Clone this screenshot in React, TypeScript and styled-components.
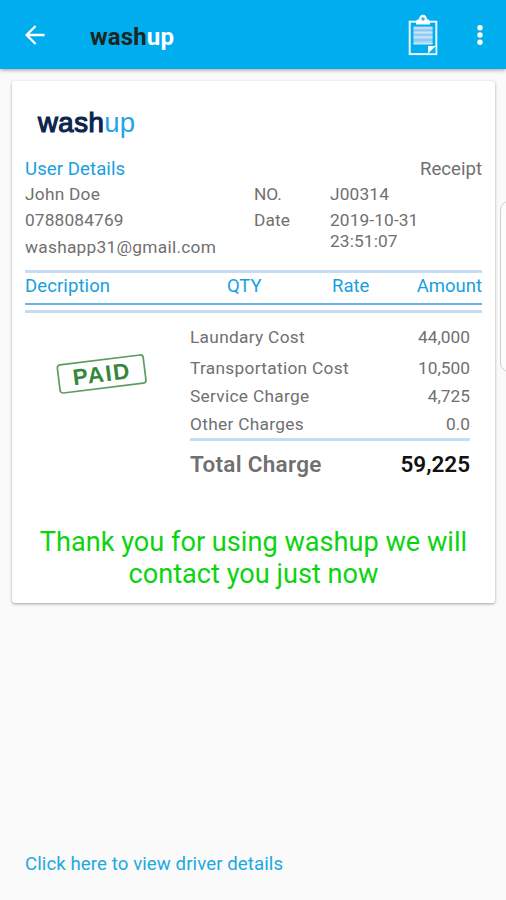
import React from "react";
import styled, { createGlobalStyle } from "styled-components";

const GlobalStyle = createGlobalStyle`
  * { box-sizing: border-box; }
  html, body { margin: 0; background: #fafafa; }
  body { font-family: Roboto, "Liberation Sans", sans-serif; font-size: 17.3px; color: #707070; }
`;

const Screen = styled.main`
  position: relative;
  display: flex;
  flex-direction: column;
  width: 506px;
  height: 900px;
  overflow: hidden;
  background: #fafafa;
`;

const Toolbar = styled.header`
  display: flex;
  align-items: center;
  flex: none;
  height: 69px;
  padding: 1px 22px 0 24px;
  background: #00aeef;
  box-shadow: 0 1px 4px rgba(0, 0, 0, 0.38);
`;

const IconButton = styled.button<{ $gap?: number }>`
  display: flex;
  padding: 0;
  border: 0;
  background: none;
  margin-left: ${(p) => p.$gap ?? 0}px;
`;

const Title = styled.h1`
  flex: 1;
  margin: 3px 0 0 44px;
  font-size: 24px;
  line-height: 28px;
  font-weight: 700;
  letter-spacing: 0.15px;
  color: #1d2521;
  span { color: #fff; }
`;

const Card = styled.section`
  flex: none;
  width: 483px;
  height: 522px;
  margin: 12px 0 0 12px;
  padding: 26px 13px 0;
  border-radius: 3px;
  background: #fff;
  box-shadow: 0 1px 3px rgba(0, 0, 0, 0.36);
`;

const Logo = styled.div`
  margin-left: 13px;
  height: 50px;
  font: 400 27.5px/31px "Liberation Sans", Arial, sans-serif;
  letter-spacing: 0.35px;
  color: #24a4e4;
  b { color: #0c2550; font-weight: 400; letter-spacing: 0.5px; -webkit-text-stroke: 1.2px #0c2550; }
`;

const Heading = styled.div`
  display: flex;
  justify-content: space-between;
  line-height: 24px;
  font-size: 18.6px;
`;

const Text = styled.span<{ $color?: string; $spacing?: number }>`
  white-space: nowrap;
  color: ${(p) => p.$color ?? "inherit"};
  letter-spacing: ${(p) => p.$spacing ?? 0}px;
`;

const Details = styled.div`
  display: grid;
  grid-template-columns: 229px 76px 110px;
  grid-template-rows: 26px 27px 36px;
  line-height: 26px;
`;

const DateValue = styled.span`
  grid-row: 2 / 4;
  grid-column: 3;
  padding-top: 3px;
  line-height: 20.6px;
  letter-spacing: 0.12px;
`;

const Rule = styled.hr<{ $thin?: boolean; $top?: number }>`
  height: ${(p) => (p.$thin ? 2 : 3)}px;
  margin: ${(p) => p.$top ?? 0}px 0 0;
  border: 0;
  background: ${(p) => (p.$thin ? "#69b3e5" : "#c5ddf3")};
`;

const TableHead = styled.div`
  display: grid;
  grid-template-columns: 202px 105px 1fr auto;
  height: 30px;
  line-height: 26px;
  font-size: 18.5px;
  color: #189fe0;
`;

const Body = styled.div`
  display: grid;
  grid-template-columns: 165px 280px;
  padding-top: 10px;
`;

const Stamp = styled.div`
  padding: 29px 0 0 30px;
  svg { display: block; }
`;

const CostRow = styled.div<{ $height: number }>`
  display: flex;
  justify-content: space-between;
  height: ${(p) => p.$height}px;
  line-height: 28px;
`;

const Total = styled.div`
  display: flex;
  justify-content: space-between;
  padding-top: 8px;
  font-size: 22.5px;
  font-weight: 600;
  line-height: 30px;
  b { color: #111; font-weight: 600; }
`;

const Thanks = styled.p`
  margin: 47px 0 0;
  text-align: center;
  font-size: 27.15px;
  line-height: 32px;
  color: #0bd40f;
`;

const DriverLink = styled.a`
  margin: auto 0 24px 25px;
  line-height: 24px;
  font-size: 18.6px;
  letter-spacing: 0.1px;
  color: #20a9e0;
`;

const EdgeHandle = styled.div`
  position: absolute;
  top: 201px;
  left: 500px;
  width: 20px;
  height: 171px;
  border: 1px solid #cdcfd1;
  border-radius: 9px;
  background: #fcfcfc;
`;

const BackIcon = () => (
  <svg width="22" height="22" viewBox="0 0 22 22" fill="none" stroke="#fff" strokeWidth="2.3">
    <path d="M20.5 11H3M11.6 2 2.6 11l9 9" />
  </svg>
);

const ClipboardIcon = () => (
  <svg width="30" height="42" viewBox="0 0 30 42" fill="none">
    <rect x="1.7" y="7.7" width="26.6" height="32.4" stroke="#e9f8ff" strokeWidth="2" />
    <rect x="5.5" y="12.5" width="19" height="18" fill="#a5d5f4" />
    <path d="M5.5 14H24.5M5.5 18.5H24.5M5.5 23H24.5M5.5 29.5H24.5" stroke="#c8e5fa" strokeWidth="1.7" />
    <path d="M5.5 16.2H24.5M5.5 21H24.5M5.5 26H24.5" stroke="#7fc0ed" />
    <path d="M20 39.5 28 31.5V40h-8Z" fill="#08aeed" />
    <path d="M20 39.5v-7.5h8Z" fill="#fff" />
    <path d="M28.3 31v9.1H19" stroke="#e9f8ff" strokeWidth="1.5" />
    <path d="M8 10.5V8q0-2.3 3-2.8C11.3 2.5 12.7.8 15 .8s3.7 1.7 4 4.4q3 .5 3 2.8v2.5Z" fill="#fff" />
    <circle cx="15" cy="5" r="1.8" fill="#35b8ee" />
  </svg>
);

const MoreIcon = () => (
  <svg width="8" height="22" viewBox="0 0 8 22" fill="#fff">
    <circle cx="4" cy="3.7" r="2.7" />
    <circle cx="4" cy="11" r="2.7" />
    <circle cx="4" cy="18.3" r="2.7" />
  </svg>
);

const PaidStamp = () => (
  <svg width="94" height="44" viewBox="0 0 94 44">
    <g transform="rotate(-7 46.5 22)">
      <rect x="3.4" y="7.8" width="86.5" height="28.4" rx="3" fill="none" stroke="#5c9c60" strokeWidth="1.7" />
      <text x="46" y="29.8" textAnchor="middle" fontFamily="Liberation Sans, Arial, sans-serif" fontWeight="700" fontSize="22.5" textLength="57" fill="#35883b">PAID</text>
    </g>
  </svg>
);

const costs = [
  { label: "Laundary Cost", value: "44,000", height: 31 },
  { label: "Transportation Cost", value: "10,500", height: 28 },
  { label: "Service Charge", value: "4,725", height: 28 },
  { label: "Other Charges", value: "0.0", height: 28 },
];

export default function App() {
  return (
    <>
      <GlobalStyle />
      <Screen>
        <Toolbar>
          <IconButton aria-label="Back"><BackIcon /></IconButton>
          <Title>wash<span>up</span></Title>
          <IconButton aria-label="Receipts"><ClipboardIcon /></IconButton>
          <IconButton aria-label="More options" $gap={38}><MoreIcon /></IconButton>
        </Toolbar>
        <Card>
          <Logo><b>wash</b>up</Logo>
          <Heading>
            <Text $color="#18a0e2" $spacing={0.07}>User Details</Text>
            <Text>Receipt</Text>
          </Heading>
          <Details>
            <Text $spacing={0.25}>John Doe</Text>
            <Text>NO.</Text>
            <Text $spacing={0.15}>J00314</Text>
            <Text $spacing={0.15}>0788084769</Text>
            <Text $spacing={0.1}>Date</Text>
            <DateValue>2019-10-31 23:51:07</DateValue>
            <Text $spacing={0.28}>washapp31@gmail.com</Text>
          </Details>
          <Rule />
          <TableHead>
            <Text $spacing={0.1}>Decription</Text>
            <Text>QTY</Text>
            <Text>Rate</Text>
            <Text>Amount</Text>
          </TableHead>
          <Rule $thin />
          <Rule $top={5} />
          <Body>
            <Stamp><PaidStamp /></Stamp>
            <div>
              {costs.map((c) => (
                <CostRow key={c.label} $height={c.height}>
                  <Text $spacing={0.3}>{c.label}</Text>
                  <Text>{c.value}</Text>
                </CostRow>
              ))}
              <Rule />
              <Total><Text $spacing={0.3}>Total Charge</Text><b>59,225</b></Total>
            </div>
          </Body>
          <Thanks>Thank you for using washup we will<br />contact you just now</Thanks>
        </Card>
        <DriverLink>Click here to view driver details</DriverLink>
        <EdgeHandle />
      </Screen>
    </>
  );
}
